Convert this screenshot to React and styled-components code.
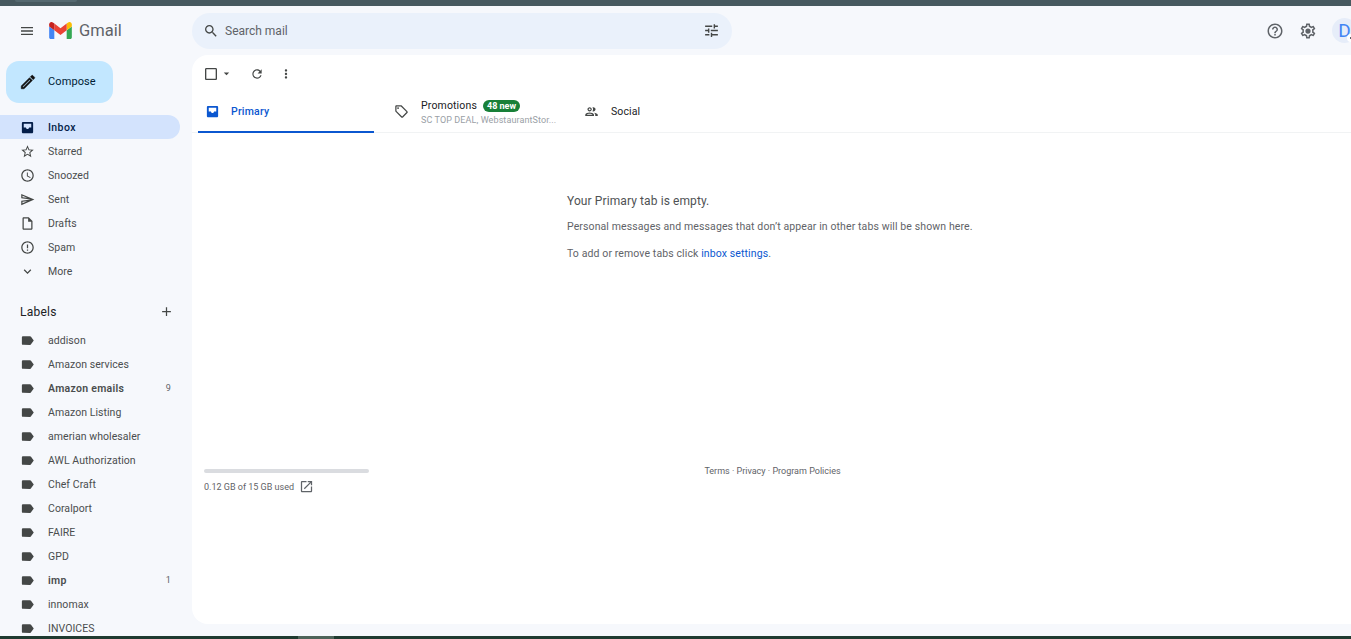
import React from "react";
import styled, { createGlobalStyle } from "styled-components";

const GlobalStyle = createGlobalStyle`
  html, body, #root {
    height: 100%;
    margin: 0;
  }
  body {
    background: #f6f8fc;
    color: #444746;
    font-family: Roboto, "Liberation Sans", sans-serif;
    overflow: hidden;
  }
`;

const paths = {
  menu: "M3 18h18v-2H3v2zm0-5h18v-2H3v2zm0-7v2h18V6H3z",
  search:
    "M15.5 14h-.79l-.28-.27C15.41 12.59 16 11.11 16 9.5 16 5.91 13.09 3 9.5 3S3 5.91 3 9.5 5.91 16 9.5 16c1.61 0 3.09-.59 4.23-1.57l.27.28v.79l5 4.99L20.49 19l-4.99-5zm-6 0C7.01 14 5 11.99 5 9.5S7.01 5 9.5 5 14 7.01 14 9.5 11.99 14 9.5 14z",
  tune: "M3 17v2h6v-2H3zM3 5v2h10V5H3zm10 16v-2h8v-2h-8v-2h-2v6h2zM7 9v2H3v2h4v2h2V9H7zm14 4v-2H11v2h10zm-6-4h2V7h4V5h-4V3h-2v6z",
  help: "M11 18h2v-2h-2v2zm1-16C6.48 2 2 6.48 2 12s4.48 10 10 10 10-4.48 10-10S17.52 2 12 2zm0 18c-4.41 0-8-3.59-8-8s3.59-8 8-8 8 3.59 8 8-3.59 8-8 8zm0-14c-2.21 0-4 1.79-4 4h2c0-1.1.9-2 2-2s2 .9 2 2c0 2-3 1.75-3 5h2c0-2.25 3-2.5 3-5 0-2.21-1.79-4-4-4z",
  settings:
    "M19.43 12.98c.04-.32.07-.64.07-.98 0-.34-.03-.66-.07-.98l2.11-1.65c.19-.15.24-.42.12-.64l-2-3.46c-.09-.16-.26-.25-.44-.25-.06 0-.12.01-.17.03l-2.49 1c-.52-.4-1.08-.73-1.69-.98l-.38-2.65C14.46 2.18 14.25 2 14 2h-4c-.25 0-.46.18-.49.42l-.38 2.65c-.61.25-1.17.59-1.69.98l-2.49-1c-.06-.02-.12-.03-.18-.03-.17 0-.34.09-.43.25l-2 3.46c-.13.22-.07.49.12.64l2.11 1.65c-.04.32-.07.65-.07.98 0 .33.03.66.07.98l-2.11 1.65c-.19.15-.24.42-.12.64l2 3.46c.09.16.26.25.44.25.06 0 .12-.01.17-.03l2.49-1c.52.4 1.08.73 1.69.98l.38 2.65c.03.24.24.42.49.42h4c.25 0 .46-.18.49-.42l.38-2.65c.61-.25 1.17-.59 1.69-.98l2.49 1c.06.02.12.03.18.03.17 0 .34-.09.43-.25l2-3.46c.12-.22.07-.49-.12-.64l-2.11-1.65zm-1.98-1.71c.04.31.05.52.05.73 0 .21-.02.43-.05.73l-.14 1.13.89.7 1.08.84-.7 1.21-1.27-.51-1.04-.42-.9.68c-.43.32-.84.56-1.25.73l-1.06.43-.16 1.13-.2 1.35h-1.4l-.19-1.35-.16-1.13-1.06-.43c-.43-.18-.83-.41-1.23-.71l-.91-.7-1.06.43-1.27.51-.7-1.21 1.08-.84.89-.7-.14-1.13c-.03-.31-.05-.54-.05-.74s.02-.43.05-.73l.14-1.13-.89-.7-1.08-.84.7-1.21 1.27.51 1.04.42.9-.68c.43-.32.84-.56 1.25-.73l1.06-.43.16-1.13.2-1.35h1.39l.19 1.35.16 1.13 1.06.43c.43.18.83.41 1.23.71l.91.7 1.06-.43 1.27-.51.7 1.21-1.07.85-.89.7.14 1.13zM12 8.5a3.5 3.5 0 1 0 0 7 3.5 3.5 0 0 0 0-7z",
  compose:
    "M3 17.25V21h3.75L17.81 9.94l-3.75-3.75L3 17.25zM5.92 19H5v-.92l9.06-9.06.92.92L5.92 19zM20.71 5.63l-2.34-2.34c-.2-.2-.45-.29-.71-.29s-.51.1-.7.29l-1.83 1.83 3.75 3.75 1.83-1.83c.39-.39.39-1.02 0-1.41z",
  inbox:
    "M19 3H5c-1.1 0-2 .9-2 2v14c0 1.1.9 2 2 2h14c1.1 0 2-.9 2-2V5c0-1.1-.9-2-2-2zm-1 9h-3.5c0 1.4-1.1 2.5-2.5 2.5S9.5 13.4 9.5 12H6V6h12v6z",
  star: "M22 9.24l-7.19-.62L12 2 9.19 8.63 2 9.24l5.46 4.73L5.82 21 12 17.27 18.18 21l-1.63-7.03L22 9.24zM12 15.4l-3.76 2.27 1-4.28-3.32-2.88 4.38-.38L12 6.1l1.71 4.04 4.38.38-3.32 2.88 1 4.28L12 15.4z",
  clock:
    "M11.99 2C6.47 2 2 6.48 2 12s4.47 10 9.99 10C17.52 22 22 17.52 22 12S17.52 2 11.99 2zM12 20c-4.42 0-8-3.58-8-8s3.58-8 8-8 8 3.58 8 8-3.58 8-8 8zm.5-13H11v6l5.25 3.15.75-1.23-4.5-2.67z",
  send: "M4.01 6.03l7.51 3.22-7.52-1 .01-2.22m7.5 8.72L4 17.97v-2.22l7.51-1M2.01 3L2 10l15 2-15 2 .01 7L23 12 2.01 3z",
  draft:
    "M14 2H6c-1.1 0-1.99.9-1.99 2L4 20c0 1.1.89 2 1.99 2H18c1.1 0 2-.9 2-2V8l-6-6zM6 20V4h7v5h5v11H6z",
  spam: "M11 15h2v2h-2zm0-8h2v6h-2zm.99-5C6.47 2 2 6.48 2 12s4.47 10 9.99 10C17.52 22 22 17.52 22 12S17.52 2 11.99 2zM12 20c-4.42 0-8-3.58-8-8s3.58-8 8-8 8 3.58 8 8-3.58 8-8 8z",
  more: "M16.59 8.59L12 13.17 7.41 8.59 6 10l6 6 6-6z",
  add: "M19 13h-6v6h-2v-6H5v-2h6V5h2v6h6v2z",
  label:
    "M17.63 5.84C17.27 5.33 16.67 5 16 5L5 5.01C3.9 5.01 3 5.9 3 7v10c0 1.1.9 1.99 2 1.99L16 19c.67 0 1.27-.33 1.63-.84L22 12l-4.37-6.16z",
  checkbox:
    "M19 5v14H5V5h14m0-2H5c-1.1 0-2 .9-2 2v14c0 1.1.9 2 2 2h14c1.1 0 2-.9 2-2V5c0-1.1-.9-2-2-2z",
  caret: "M7 10l5 5 5-5z",
  refresh:
    "M17.65 6.35C16.2 4.9 14.21 4 12 4c-4.42 0-7.99 3.58-7.99 8s3.57 8 7.99 8c3.73 0 6.84-2.55 7.73-6h-2.08c-.82 2.33-3.04 4-5.65 4-3.31 0-6-2.69-6-6s2.69-6 6-6c1.66 0 3.14.69 4.22 1.78L13 11h7V4l-2.35 2.35z",
  dots: "M12 8c1.1 0 2-.9 2-2s-.9-2-2-2-2 .9-2 2 .9 2 2 2zm0 2c-1.1 0-2 .9-2 2s.9 2 2 2 2-.9 2-2-.9-2-2-2zm0 6c-1.1 0-2 .9-2 2s.9 2 2 2 2-.9 2-2-.9-2-2-2z",
  tag: "M21.41 11.58l-9-9C12.05 2.22 11.55 2 11 2H4c-1.1 0-2 .9-2 2v7c0 .55.22 1.05.59 1.42l9 9c.36.36.86.58 1.41.58s1.05-.22 1.41-.59l7-7c.37-.36.59-.86.59-1.41s-.23-1.06-.59-1.42zM13 20.01L4 11V4h7v-.01l9 9-7 7.02zM6.5 5a1.5 1.5 0 1 0 0 3 1.5 1.5 0 0 0 0-3z",
  people:
    "M9 13.75c-2.34 0-7 1.17-7 3.5V19h14v-1.75c0-2.33-4.66-3.5-7-3.5zM4.34 17c.84-.58 2.87-1.25 4.66-1.25s3.82.67 4.66 1.25H4.34zM9 12c1.93 0 3.5-1.57 3.5-3.5S10.93 5 9 5 5.5 6.57 5.5 8.5 7.07 12 9 12zm0-5c.83 0 1.5.67 1.5 1.5S9.83 10 9 10s-1.5-.67-1.5-1.5S8.17 7 9 7zm7.04 6.81c1.16.84 1.96 1.96 1.96 3.44V19h4v-1.75c0-2.02-3.5-3.17-5.96-3.44zM15 12c1.93 0 3.5-1.57 3.5-3.5S16.93 5 15 5c-.54 0-1.04.13-1.5.35.63.89 1 1.98 1 3.15s-.37 2.26-1 3.15c.46.22.96.35 1.5.35z",
  openNew:
    "M19 19H5V5h7V3H5c-1.11 0-2 .9-2 2v14c0 1.1.89 2 2 2h14c1.1 0 2-.9 2-2v-7h-2v7zM14 3v2h3.59l-9.83 9.83 1.41 1.41L19 6.41V10h2V3h-7z",
};

const Svg = styled.svg`
  display: block;
  flex-shrink: 0;
  width: ${(p) => p.$size || 15}px;
  height: ${(p) => p.$size || 15}px;
  fill: ${(p) => p.$color || "#444746"};
  stroke: ${(p) => (p.$heavy ? p.$color : "none")};
  stroke-width: ${(p) => (p.$heavy ? 0.7 : 0)};
`;

const Icon = ({ name, size, color, heavy }) => (
  <Svg viewBox="0 0 24 24" $size={size} $color={color} $heavy={heavy}>
    <path d={paths[name]} />
  </Svg>
);

const GmailLogo = () => (
  <svg width="23" height="17" viewBox="52 42 88 66">
    <path fill="#4285f4" d="M58 108h14V74L52 59v43c0 3.32 2.69 6 6 6" />
    <path fill="#34a853" d="M120 108h14c3.32 0 6-2.69 6-6V59l-20 15" />
    <path fill="#fbbc04" d="M120 48v26l20-15v-8c0-7.42-8.47-11.65-14.4-7.2" />
    <path fill="#ea4335" d="M72 74V48l24 18 24-18v26L96 92" />
    <path fill="#c5221f" d="M52 51v8l20 15V48l-5.6-4.2c-5.94-4.45-14.4-.22-14.4 7.2" />
  </svg>
);

const Page = styled.div`
  display: flex;
  flex-direction: column;
  height: 100vh;
  overflow: hidden;
`;

const TopStrip = styled.div`
  flex: 0 0 6px;
  padding-left: 15px;
  background: #47595f;
`;

const BrowserTabEdge = styled.div`
  width: 62px;
  height: 2px;
  border-radius: 0 0 4px 4px;
  background: #556970;
`;

const BottomStrip = styled.div`
  flex: 0 0 3px;
  display: flex;
  padding-left: 298px;
  background: #1f3a30;
`;

const TaskbarItem = styled.div`
  width: 36px;
  background: #4d6359;
`;

const Header = styled.header`
  flex: 0 0 49px;
  display: flex;
  align-items: center;
`;

const Brand = styled.div`
  flex: 0 0 192px;
  display: flex;
  align-items: center;
  padding-left: 19px;
  box-sizing: border-box;
`;

const BrandLogo = styled.div`
  display: flex;
  margin-left: 14px;
`;

const BrandName = styled.span`
  margin-left: 7px;
  font-size: 16.5px;
  color: #5f6368;
`;

const SearchBar = styled.div`
  flex: 0 0 540px;
  height: 36px;
  display: flex;
  align-items: center;
  gap: 6px;
  padding: 0 12px 0 11px;
  box-sizing: border-box;
  border-radius: 18px;
  background: #eaf1fb;
`;

const SearchText = styled.span`
  flex: 1;
  font-size: 12px;
  color: #5f6368;
`;

const HeaderActions = styled.div`
  margin-left: auto;
  margin-right: -6px;
  display: flex;
  align-items: center;
  gap: 15px;
`;

const Avatar = styled.div`
  position: relative;
  width: 25px;
  height: 25px;
  display: flex;
  align-items: center;
  justify-content: center;
  border-radius: 50%;
  background: #e6edf9;
  color: #4285f4;
  font-size: 19px;
`;

const AvatarBadge = styled.span`
  position: absolute;
  top: 16px;
  left: 15px;
  width: 8px;
  height: 8px;
  display: flex;
  align-items: center;
  justify-content: center;
  border-radius: 50%;
  background: #fff;
  &::after {
    content: "";
    width: 3px;
    height: 2px;
    background: #5f6368;
  }
`;

const Body = styled.div`
  flex: 1;
  min-height: 0;
  display: flex;
`;

const Sidebar = styled.nav`
  flex: 0 0 192px;
  padding-top: 6px;
  box-sizing: border-box;
  overflow: hidden;
`;

const Compose = styled.button`
  width: 107px;
  height: 42px;
  margin: 0 0 12px 6px;
  padding: 0 0 0 13px;
  display: flex;
  align-items: center;
  gap: 11px;
  border: 0;
  border-radius: 13px;
  background: #c2e7ff;
  color: #001d35;
  font: 400 11px Roboto, sans-serif;
  letter-spacing: 0.1px;
`;

const ComposeLabel = styled.span`
  padding-bottom: 2px;
`;

const Row = styled.div`
  width: 180px;
  height: 24px;
  display: flex;
  align-items: center;
  gap: 13px;
  padding: 0 9px 0 20px;
  box-sizing: border-box;
  border-radius: 0 12px 12px 0;
  font-size: 10.5px;
  letter-spacing: ${(p) => (p.$active ? "0.4px" : p.$weight ? "0.28px" : "0.06px")};
  font-weight: ${(p) => p.$weight || 400};
  color: ${(p) => (p.$active ? "#041e49" : "#4a4d4e")};
  background: ${(p) => (p.$active ? "#d3e3fd" : "transparent")};
`;

const RowName = styled.span`
  flex: 1;
  white-space: nowrap;
`;

const RowCount = styled.span`
  font-size: 9px;
  font-weight: 400;
  color: #5f6368;
`;

const LabelsHead = styled.div`
  width: 180px;
  height: 24px;
  margin: 16px 0 5px;
  padding: 1px 6px 0 20px;
  box-sizing: border-box;
  display: flex;
  align-items: center;
  justify-content: space-between;
  font-size: 12px;
  letter-spacing: 0.25px;
  color: #202124;
`;

const Main = styled.main`
  flex: 1;
  min-width: 0;
  margin-bottom: 12px;
  display: flex;
  flex-direction: column;
  border-radius: 16px 0 0 16px;
  background: #fff;
`;

const Toolbar = styled.div`
  flex: 0 0 36px;
  display: flex;
  align-items: center;
  padding: 1px 0 0 11px;
  box-sizing: border-box;
`;

const ToolButton = styled.div`
  display: flex;
  align-items: center;
  margin-right: ${(p) => p.$gap}px;
`;

const Tabs = styled.div`
  flex: 0 0 41px;
  display: flex;
  padding-left: 6px;
  border-bottom: 1px solid #f1f3f4;
`;

const Tab = styled.div`
  flex: 0 0 ${(p) => p.$width}px;
  display: flex;
  align-items: center;
  gap: ${(p) => p.$gap}px;
  padding-left: ${(p) => p.$pad}px;
  box-sizing: border-box;
  margin-bottom: -1px;
  border-bottom: 2px solid ${(p) => (p.$active ? "#0b57d0" : "transparent")};
  font-size: 10.5px;
  letter-spacing: ${(p) => (p.$active ? "0.22px" : "0.1px")};
  font-weight: ${(p) => (p.$active ? 500 : 400)};
  color: ${(p) => (p.$active ? "#0b57d0" : "#202124")};
`;

const TabStack = styled.div`
  display: flex;
  flex-direction: column;
  gap: 3px;
  padding-top: 2px;
`;

const TabTitle = styled.div`
  display: flex;
  align-items: center;
  gap: 6px;
  letter-spacing: 0.15px;
`;

const NewBadge = styled.span`
  height: 12px;
  padding: 0 4px;
  display: flex;
  align-items: center;
  border-radius: 6px;
  background: #188038;
  color: #fff;
  font-size: 9px;
  font-weight: 700;
  letter-spacing: 0;
`;

const TabSnippet = styled.div`
  font-size: 9px;
  letter-spacing: 0.1px;
  color: #9aa0a6;
  white-space: nowrap;
`;

const Empty = styled.section`
  flex: 1;
  padding: 59px 0 0 375px;
  color: #5f6368;
  font-size: 10.5px;
  letter-spacing: 0.11px;
`;

const EmptyTitle = styled.div`
  font-size: 12px;
  letter-spacing: 0.1px;
  line-height: 18px;
  margin-bottom: 9px;
  color: #4f5254;
`;

const EmptyLine = styled.div`
  line-height: 16px;
  margin-bottom: 11px;
`;

const SettingsLink = styled.a`
  color: #0b57d0;
`;

const Footer = styled.footer`
  flex: 0 0 160px;
  display: grid;
  grid-template-columns: 1fr auto 1fr;
  padding: 0 12px;
  box-sizing: border-box;
  font-size: 9px;
  color: #5f6368;
`;

const StorageBar = styled.div`
  width: 165px;
  height: 4px;
  margin: 5px 0 6px;
  border-radius: 2px;
  background: #dadce0;
`;

const StorageText = styled.div`
  display: flex;
  align-items: center;
  gap: 5px;
`;

const FooterLinks = styled.div`
  padding: 1px 0 0 2px;
  line-height: 12px;
`;

const nav = [
  ["inbox", "Inbox", true],
  ["star", "Starred"],
  ["clock", "Snoozed"],
  ["send", "Sent"],
  ["draft", "Drafts"],
  ["spam", "Spam"],
  ["more", "More"],
];

const labels = [
  ["addison"],
  ["Amazon services"],
  ["Amazon emails", 9],
  ["Amazon Listing"],
  ["amerian wholesaler"],
  ["AWL Authorization"],
  ["Chef Craft"],
  ["Coralport"],
  ["FAIRE"],
  ["GPD"],
  ["imp", 1],
  ["innomax"],
  ["INVOICES"],
];

export default function App() {
  return (
    <Page>
      <GlobalStyle />
      <TopStrip>
        <BrowserTabEdge />
      </TopStrip>
      <Header>
        <Brand>
          <Icon name="menu" size={16} />
          <BrandLogo>
            <GmailLogo />
          </BrandLogo>
          <BrandName>Gmail</BrandName>
        </Brand>
        <SearchBar>
          <Icon name="search" size={16} color="#444746" />
          <SearchText>Search mail</SearchText>
          <Icon name="tune" size={17} />
        </SearchBar>
        <HeaderActions>
          <Icon name="help" size={18} color="#5f6368" />
          <Icon name="settings" size={18} color="#5f6368" />
          <Avatar>
            D
            <AvatarBadge />
          </Avatar>
        </HeaderActions>
      </Header>
      <Body>
        <Sidebar>
          <Compose>
            <Icon name="compose" size={18} color="#111111" heavy />
            <ComposeLabel>Compose</ComposeLabel>
          </Compose>
          {nav.map(([icon, name, active]) => (
            <Row key={name} $active={active} $weight={active ? 500 : 0}>
              <Icon name={icon} color={active ? "#041e49" : "#444746"} />
              <RowName>{name}</RowName>
            </Row>
          ))}
          <LabelsHead>
            Labels
            <Icon name="add" size={15} />
          </LabelsHead>
          {labels.map(([name, count]) => (
            <Row key={name} $weight={count ? 600 : 0}>
              <Icon name="label" />
              <RowName>{name}</RowName>
              {count && <RowCount>{count}</RowCount>}
            </Row>
          ))}
        </Sidebar>
        <Main>
          <Toolbar>
            <ToolButton $gap={1}>
              <Icon name="checkbox" size={16} />
            </ToolButton>
            <ToolButton $gap={17}>
              <Icon name="caret" size={13} />
            </ToolButton>
            <ToolButton $gap={15}>
              <Icon name="refresh" size={14} />
            </ToolButton>
            <ToolButton $gap={0}>
              <Icon name="dots" size={14} />
            </ToolButton>
          </Toolbar>
          <Tabs>
            <Tab $width={176} $pad={7} $gap={11} $active>
              <Icon name="inbox" color="#0b57d0" />
              Primary
            </Tab>
            <Tab $width={194} $pad={20} $gap={12}>
              <Icon name="tag" />
              <TabStack>
                <TabTitle>
                  Promotions
                  <NewBadge>48 new</NewBadge>
                </TabTitle>
                <TabSnippet>SC TOP DEAL, WebstaurantStor...</TabSnippet>
              </TabStack>
            </Tab>
            <Tab $width={120} $pad={16} $gap={12}>
              <Icon name="people" />
              Social
            </Tab>
          </Tabs>
          <Empty>
            <EmptyTitle>Your Primary tab is empty.</EmptyTitle>
            <EmptyLine>
              Personal messages and messages that don’t appear in other tabs will be shown here.
            </EmptyLine>
            <EmptyLine>
              To add or remove tabs click <SettingsLink>inbox settings</SettingsLink>.
            </EmptyLine>
          </Empty>
          <Footer>
            <div>
              <StorageBar />
              <StorageText>
                0.12 GB of 15 GB used
                <Icon name="openNew" size={15} color="#5f6368" />
              </StorageText>
            </div>
            <FooterLinks>Terms · Privacy · Program Policies</FooterLinks>
          </Footer>
        </Main>
      </Body>
      <BottomStrip>
        <TaskbarItem />
      </BottomStrip>
    </Page>
  );
}
